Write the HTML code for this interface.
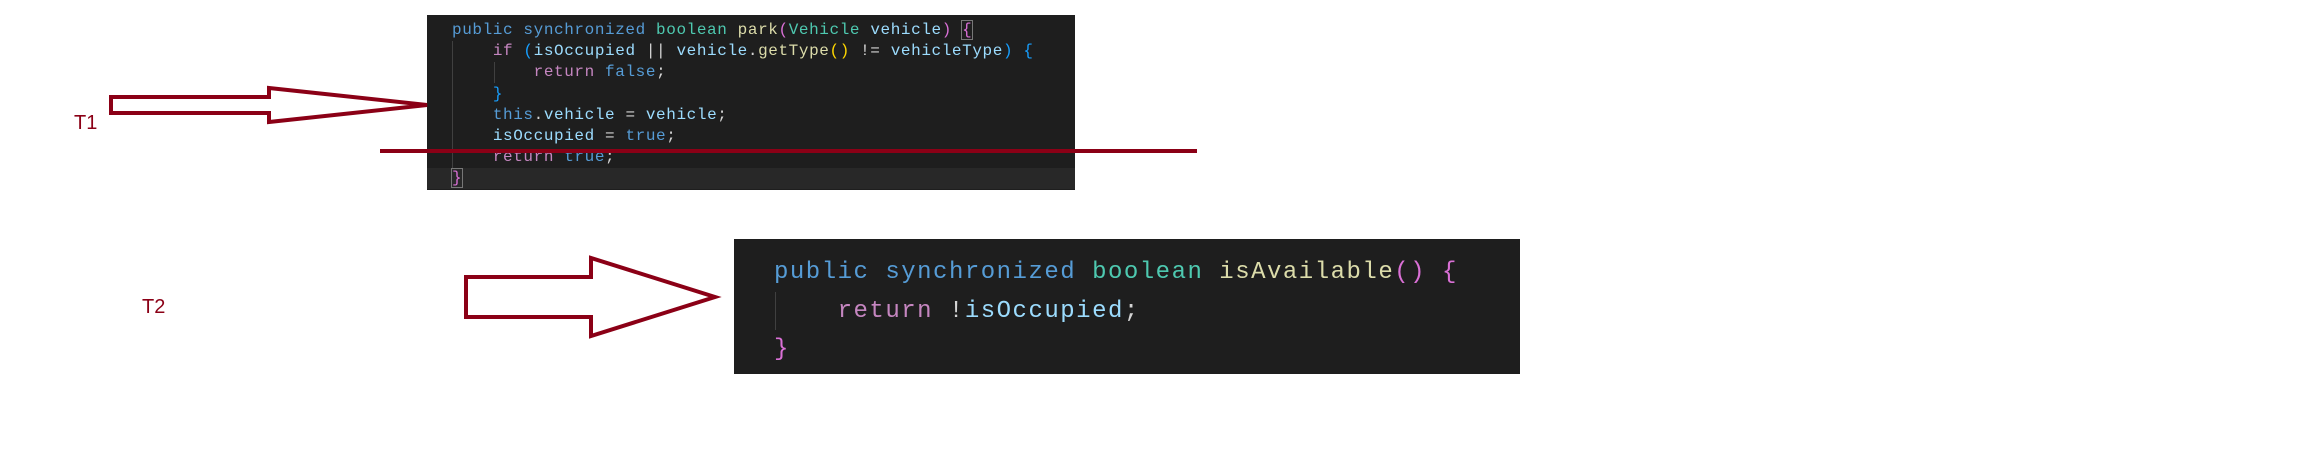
<!DOCTYPE html>
<html><head><meta charset="utf-8"><style>
body{margin:0;width:2304px;height:450px;background:#fff;position:relative;overflow:hidden;font-family:"Liberation Mono",monospace}
.box{position:absolute;background:#1e1e1e}
.code{position:absolute;white-space:pre;color:#d4d4d4}
.k{color:#569cd6}.t{color:#4ec9b0}.f{color:#dcdcaa}.v{color:#9cdcfe}.r{color:#c586c0}.y{color:#ffd700}.p{color:#da70d6}.b{color:#179fff}
.lbl{position:absolute;font-family:"Liberation Sans",sans-serif;color:#8b0016;font-size:20px}
</style></head><body>
<div class="box" style="left:427px;top:15px;width:648px;height:175px"></div>
<div style="position:absolute;left:427px;top:168px;width:648px;height:21px;background:#282828"></div>
<div style="position:absolute;left:452px;top:41px;width:1px;height:128px;background:#404040"></div>
<div style="position:absolute;left:494px;top:62px;width:1px;height:21px;background:#404040"></div>
<div class="code" style="left:452px;top:20px;font-size:16px;line-height:21.2px;letter-spacing:0.6px"><span class="k">public</span> <span class="k">synchronized</span> <span class="t">boolean</span> <span class="f">park</span><span class="p">(</span><span class="t">Vehicle</span> <span class="v">vehicle</span><span class="p">)</span> <span class="p" style="outline:1px solid #777">{</span>
    <span class="r">if</span> <span class="b">(</span><span class="v">isOccupied</span> || <span class="v">vehicle</span>.<span class="f">getType</span><span class="y">()</span> != <span class="v">vehicleType</span><span class="b">)</span> <span class="b">{</span>
        <span class="r">return</span> <span class="k">false</span>;
    <span class="b">}</span>
    <span class="k">this</span>.<span class="v">vehicle</span> = <span class="v">vehicle</span>;
    <span class="v">isOccupied</span> = <span class="k">true</span>;
    <span class="r">return</span> <span class="k">true</span>;
<span class="p" style="outline:1px solid #777">}</span></div>
<div style="position:absolute;left:380px;top:149px;width:817px;height:4px;background:#8b0016"></div>

<div class="box" style="left:734px;top:239px;width:786px;height:135px"></div>
<div style="position:absolute;left:775px;top:292px;width:1px;height:38px;background:#404040"></div>
<div class="code" style="left:774px;top:254px;font-size:24px;line-height:38.5px;letter-spacing:1.5px"><span class="k">public</span> <span class="k">synchronized</span> <span class="t">boolean</span> <span class="f">isAvailable</span><span class="p">()</span> <span class="p">{</span>
    <span class="r">return</span> !<span class="v">isOccupied</span>;
<span class="p">}</span></div>

<svg style="position:absolute;left:0;top:0" width="2304" height="450">
<polygon points="111,97 269,97 269,88 427,105 269,122 269,113 111,113" fill="none" stroke="#8b0016" stroke-width="4" stroke-linejoin="miter"/>
<polygon points="466,277 591,277 591,258 715,297 591,336 591,317 466,317" fill="none" stroke="#8b0016" stroke-width="4"/>
</svg>
<div class="lbl" style="left:74px;top:112px">T1</div>
<div class="lbl" style="left:142px;top:296px">T2</div>
</body></html>
